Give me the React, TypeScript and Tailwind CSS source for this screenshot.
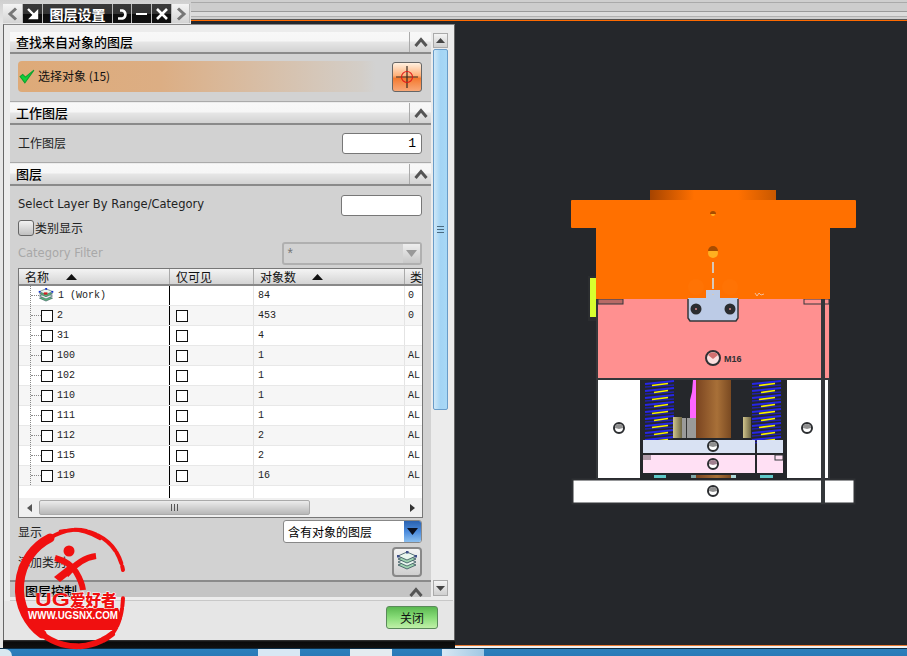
import React from "react";

const CJK = "font-['Noto_Sans_CJK_SC','Noto_Sans',sans-serif]";

function Chevron() {
  return (
    <svg width="14" height="10" viewBox="0 0 14 10">
      <polyline points="1.5,9 7,2.5 12.5,9" fill="none" stroke="#555" strokeWidth="3" />
    </svg>
  );
}

function SectionHeader({ title }: { title: string }) {
  return (
    <div className="h-[22px] shrink-0 flex items-stretch border-b-2 border-[#8a8a8a] bg-[linear-gradient(#f8f8f8_0%,#f6f6f6_45%,#e6e6e6_50%,#d2d2d2_100%)]">
      <div className="flex-1 pl-[6px] pb-[2px] flex items-center text-[13px] font-medium text-black leading-none">{title}</div>
      <div className="w-[22px] flex items-center justify-center border-l border-l-[#aaa]">
        <Chevron />
      </div>
    </div>
  );
}

function TabBtn({ children, w, light }: { children: React.ReactNode; w: number; light?: boolean }) {
  return (
    <div
      style={{ width: w }}
      className={
        "h-[19px] flex items-center justify-center border-r border-[#bbb] " +
        (light
          ? "bg-[linear-gradient(#f4f4f4,#d4d4d4)]"
          : "bg-[linear-gradient(#3a3a3a_0%,#333_50%,#0c0c0c_55%,#111_100%)] text-white")
      }
    >
      {children}
    </div>
  );
}

function Check({ size = 12 }: { size?: number }) {
  return <div style={{ width: size, height: size }} className="border border-[#111] bg-white" />;
}

const rows = [
  ["1 (Work)", "84", "0"],
  ["2", "453", "0"],
  ["31", "4", ""],
  ["100", "1", "AL"],
  ["102", "1", "AL"],
  ["110", "1", "AL"],
  ["111", "1", "AL"],
  ["112", "2", "AL"],
  ["115", "2", "AL"],
  ["119", "16", "AL"],
];

function LayersIcon({ size = 22, faded }: { size?: number; faded?: boolean }) {
  const ys = [13, 10, 7, 4];
  return (
    <svg width={size} height={size} viewBox="0 0 22 22">
      {ys.map((y, i) => (
        <polygon
          key={y}
          points={`11,${y - 3} 20,${y + 1} 11,${y + 5} 2,${y + 1}`}
          fill={i % 2 ? "#e9f6ee" : faded ? "#9fd3b0" : "#58b878"}
          stroke="#34505a"
          strokeWidth="0.8"
        />
      ))}
      <rect x="10" y="0" width="2.5" height="2.5" fill={faded ? "#3d4f88" : "#1030c8"} />
      <rect x="1" y="4" width="2.5" height="2.5" fill={faded ? "#3d4f88" : "#1030c8"} />
      <rect x="18.5" y="4" width="2.5" height="2.5" fill={faded ? "#3d4f88" : "#1030c8"} />
      {!faded && <rect x="8" y="6" width="5" height="3" fill="#d02020" />}
    </svg>
  );
}

function Hole({ x, y, r = 5, fill = "#ddd" }: { x: number; y: number; r?: number; fill?: string }) {
  return (
    <g>
      <circle cx={x} cy={y} r={r} fill="#fff" stroke="#2b2d30" strokeWidth="2" />
      <path d={`M${x - r + 1} ${y}A${r - 1} ${r - 1} 0 0 1 ${x + r - 1} ${y}L${x} ${y + 1}Z`} fill={fill === "#ddd" ? "#8f8f8f" : fill} />
    </g>
  );
}

function Spring({ x }: { x: number }) {
  const ys = Array.from({ length: 9 }, (_, i) => 382 + i * 7);
  return (
    <g>
      <rect x={x} y="380" width="31" height="58" fill="#25272b" />
      {ys.map((y, i) => (
        <g key={y}>
          <line x1={x + 1} y1={y + 2} x2={x + 30} y2={y - 1} stroke="#2626e8" strokeWidth="2" />
          <line x1={x + 1} y1={y + 5} x2={x + 30} y2={y + 3} stroke="#2020b0" strokeWidth="1.4" />
          <line x1={x + 8 + (i % 2) * 2} y1={y + 3.5} x2={x + 24} y2={y + 1.5} stroke="#f6f000" strokeWidth="1.6" />
        </g>
      ))}
    </g>
  );
}

function Mold() {
  return (
    <svg className="block w-full h-full" viewBox="455 24 452 621" preserveAspectRatio="xMinYMin meet">
      <defs>
        <linearGradient id="topP" x1="0" x2="1" y1="0" y2="0">
          <stop offset="0" stopColor="#a64400" />
          <stop offset="0.35" stopColor="#ff7000" />
          <stop offset="0.7" stopColor="#ff7000" />
          <stop offset="1" stopColor="#c85800" />
        </linearGradient>
        <linearGradient id="cop" x1="0" x2="1" y1="0" y2="0">
          <stop offset="0" stopColor="#7a4420" />
          <stop offset="0.6" stopColor="#a87038" />
          <stop offset="1" stopColor="#7a4a22" />
        </linearGradient>
        <linearGradient id="tan" x1="0" x2="1" y1="0" y2="0">
          <stop offset="0" stopColor="#d0c48c" />
          <stop offset="1" stopColor="#6e6644" />
        </linearGradient>
      </defs>
      <rect x="572.5" y="479.5" width="282" height="24" fill="#fff" stroke="#2f3134" strokeWidth="2" />
      <rect x="640" y="378" width="148" height="102" fill="#25272b" />
      <rect x="598" y="380" width="42" height="98" fill="#fff" />
      <rect x="787" y="380" width="34" height="98" fill="#fff" />
      <rect x="825" y="380" width="3" height="98" fill="#fff" />
      <rect x="596" y="299" width="2" height="180" fill="#34373a" />
      <rect x="828" y="299" width="2" height="180" fill="#34373a" />
      <rect x="598" y="299" width="231" height="79" fill="#ff9090" />
      <rect x="598" y="378" width="231" height="2" fill="#34373a" />
      <rect x="598" y="299" width="25" height="5" fill="#b86a66" stroke="#34373a" />
      <rect x="804" y="299" width="25" height="5" fill="#ff9090" stroke="#34373a" />
      <rect x="588" y="276" width="8" height="45" fill="#2b2d30" />
      <rect x="590" y="278" width="6" height="39" fill="#d8ff2f" />
      <rect x="650" y="190" width="126" height="11" fill="url(#topP)" />
      <rect x="596" y="228" width="234" height="71" fill="#ff7000" />
      <rect x="571" y="200" width="285" height="28" rx="1" fill="#ff7000" />
      <path d="M688 298H706V290H720V298H738V318L736 321H690L688 318Z" fill="#bccbe6" />
      <path d="M688 299V318L690 321H736L738 318V299" fill="none" stroke="#34373a" strokeWidth="1.5" />
      <circle cx="696" cy="309" r="5.5" fill="#2b2d30" />
      <circle cx="730" cy="309" r="5.5" fill="#2b2d30" />
      <circle cx="696" cy="309" r="1" fill="#d88" />
      <circle cx="730" cy="309" r="1" fill="#d88" />
      <circle cx="713" cy="214" r="2" fill="#ffb020" />
      <path d="M710 214A3 3 0 0 1 716 214" fill="#a84c00" />
      <circle cx="713" cy="253" r="5" fill="#ffb020" />
      <path d="M708 251A5 5 0 0 1 718 251" fill="#a84c00" />
      <line x1="713" y1="262" x2="713" y2="295" stroke="#d8c8b8" strokeWidth="2" strokeDasharray="11 5" />
      <path d="M755 293l2 3 2-3 2 2 3-1" fill="none" stroke="#f0d0c0" strokeWidth="0.8" />
      <circle cx="696" cy="287" r="8" fill="#ff7304" />
      <circle cx="730" cy="287" r="8" fill="#ff7304" />
      <rect x="821" y="299" width="4" height="205" fill="#34373a" />
      <circle cx="713" cy="358" r="7" fill="#fbe0e0" stroke="#2f3134" strokeWidth="2" />
      <path d="M708 355A6 6 0 0 1 718 355L713 359Z" fill="#d07070" />
      <text x="724" y="362" fontSize="9" fontWeight="700" fill="#2f3134" className="font-['Liberation_Sans',sans-serif]">
        M16
      </text>
      <Spring x={644} />
      <Spring x={751} />
      <path d="M693 380H696V418H690V400L692 392Z" fill="#ff66ff" />
      <rect x="696" y="380" width="35" height="58" fill="url(#cop)" />
      <rect x="673" y="417" width="9" height="21" fill="url(#tan)" />
      <rect x="743" y="417" width="8" height="21" fill="url(#tan)" />
      <rect x="682" y="418" width="14" height="20" fill="#9a9a9a" />
      <rect x="686" y="418" width="1" height="20" fill="#333" />
      <rect x="643" y="440" width="112" height="13" fill="#d9e2f3" />
      <rect x="757" y="440" width="26" height="13" fill="#d9e2f3" />
      <rect x="643" y="455" width="112" height="18" fill="#ffe0f4" />
      <rect x="757" y="455" width="26" height="18" fill="#ffe0f4" />
      <rect x="643" y="455" width="8" height="5" fill="#b09aa8" />
      <rect x="775" y="455" width="8" height="5" fill="#ffe0f4" stroke="#34373a" />
      <rect x="654" y="475" width="12" height="3" fill="#60c8c8" />
      <rect x="691" y="475" width="5" height="3" fill="#80a8a8" />
      <rect x="696" y="475" width="35" height="3" fill="url(#cop)" />
      <rect x="731" y="475" width="5" height="3" fill="#b0d8d8" />
      <rect x="760" y="475" width="13" height="3" fill="#60c8c8" />
      <Hole x={619} y={428} />
      <Hole x={807} y={428} />
      <Hole x={713} y={446} />
      <Hole x={713} y={464} fill="#a08090" />
      <Hole x={713} y={491} />
    </svg>
  );
}

function Logo() {
  return (
    <svg className="absolute left-0 top-[520px]" width="135" height="130" viewBox="0 520 135 130">
      <g fill="none" stroke="#f01010" strokeLinecap="round">
        <path d="M50 538A54 56 0 0 0 42 634" strokeWidth="9" />
        <path d="M42 634A56 56 0 0 0 112 634" strokeWidth="6" strokeDasharray="22 2 14 3" />
        <path d="M112 634Q122 622 123 598" strokeWidth="4" strokeDasharray="8 2" />
        <path d="M50 538Q72 524 95 534T123 570" strokeWidth="4" strokeDasharray="24 2 12 3 7 2" />
        <path d="M60 531Q80 527 100 539" strokeWidth="2.5" />
        <path d="M96 556Q80 558 66 575" strokeWidth="6" strokeLinecap="butt" />
        <path d="M55 558Q70 562 76 572T83 590" strokeWidth="6" strokeLinecap="butt" />
      </g>
      <path d="M54 577L68 566L74 571L60 582Z" fill="#f01010" />
      <circle cx="69" cy="551" r="5.5" fill="#f01010" />
      <path d="M24 608H118L122 618L116 630H36Z" fill="#f01010" />
      <text
        x="35"
        y="606"
        fontSize="19"
        fontWeight="800"
        fill="#f01010"
        stroke="#ffffff"
        strokeWidth="0.7"
        paintOrder="stroke"
        textLength="35"
        lengthAdjust="spacingAndGlyphs"
        className="font-['Liberation_Sans',sans-serif]"
      >
        UG
      </text>
      <text x="70" y="606" fontSize="15.5" fontWeight="800" fill="#f01010" stroke="#ffffff" strokeWidth="1.2" paintOrder="stroke" className={CJK}>
        爱好者
      </text>
      <text x="28" y="618.5" fontSize="10" fontWeight="700" fill="#fff" textLength="90" lengthAdjust="spacingAndGlyphs" className="font-['Liberation_Sans',sans-serif]">
        WWW.UGSNX.COM
      </text>
    </svg>
  );
}

export default function App() {
  return (
    <div className={"relative w-[907px] h-[656px] overflow-hidden bg-[#25272b] flex flex-col " + CJK}>
      {/* top strip */}
      <div className="h-[24px] flex shrink-0 bg-[#d6d6d6]">
        <div className="w-[191px] pl-[3px] pt-[4px] flex items-start bg-[linear-gradient(#cfcfcf,#e8e8e8)]">
          <TabBtn w={20} light>
            <svg width="12" height="14" viewBox="0 0 12 14"><polyline points="9,1.5 3,7 9,12.5" fill="none" stroke="#777" strokeWidth="3" /></svg>
          </TabBtn>
          <TabBtn w={20}>
            <svg width="14" height="14" viewBox="0 0 14 14"><path d="M2 2L9 9M5 11L11 11L11 5Z" stroke="#fff" strokeWidth="2.4" fill="#fff" /></svg>
          </TabBtn>
          <TabBtn w={70}>
            <span className="text-[14px] font-bold leading-none">图层设置</span>
          </TabBtn>
          <TabBtn w={19}>
            <svg width="14" height="14" viewBox="0 0 14 14"><path d="M3 11.5H7.5A4.2 4.2 0 0 0 7.5 3.5H5" fill="none" stroke="#fff" strokeWidth="2.6" /></svg>
          </TabBtn>
          <TabBtn w={20}>
            <div className="w-[11px] h-[2px] bg-white" />
          </TabBtn>
          <TabBtn w={20}>
            <svg width="14" height="14" viewBox="0 0 14 14"><path d="M2 2L12 12M12 2L2 12" stroke="#fff" strokeWidth="2.6" /></svg>
          </TabBtn>
          <TabBtn w={18} light>
            <svg width="12" height="14" viewBox="0 0 12 14"><polyline points="3,1.5 9,7 3,12.5" fill="none" stroke="#777" strokeWidth="3" /></svg>
          </TabBtn>
        </div>
        <div className="flex-1 flex flex-col">
          <div className="h-[3px] bg-[#cfcfcf] border-b border-[#aaa]" />
          <div className="h-[9px] bg-[#cdcdcd] border-b border-[#9a9a9a]" />
          <div className="h-[5px] bg-[#dcdcdc] border-b border-[#b0b0b0]" />
          <div className="h-[3px] bg-[#cfcfcf] border-b border-[#555]" />
          <div className="h-[1px] bg-[#ff6a00]" />
          <div className="h-[3px] bg-[#25272b]" />
        </div>
      </div>

      <div className="flex flex-1 min-h-0">
        {/* dialog */}
        <div className="w-[455px] shrink-0 flex flex-col bg-[#e9e9e9] border-l-[3px] border-l-[#e6e6e6]">
          <div className="flex-1 min-h-0 flex flex-col border-l border-r border-[#666] border-t border-t-[#888] bg-[#ececec]">
            <div className="h-[574px] shrink-0 pl-[6px] pt-[7px] flex">
              {/* scroll content */}
              <div className="w-[421px] h-[565px] flex flex-col overflow-hidden">
                <SectionHeader title="查找来自对象的图层" />
                <div className="h-[48px] shrink-0 mb-[1px] bg-[#d2d2d2] pl-[8px] pr-[9px] pt-[7px] flex items-start border-b border-[#aaa]">
                  <div className="w-[358px] h-[31px] pb-[2px] rounded-[4px] bg-[linear-gradient(90deg,#deaa78_0%,#dcae84_40%,#d3cec8_96%,#d2d2d2_100%)] flex items-center gap-[3px] pl-[1px] text-[12px] text-[#111]">
                    <svg width="16" height="16" viewBox="0 0 15 15"><path d="M1 8L5.5 14L14 2L6 8.5L3.5 6Z" fill="#10d038" stroke="#10a030" strokeWidth="1" /></svg>
                    <span>选择对象 (15)</span>
                  </div>
                  <div className="ml-auto mt-[1px] w-[30px] h-[30px] rounded-[3px] border border-[#666] bg-[linear-gradient(#fff0e0,#ffb078_45%,#f47a30_55%,#f8a878)] flex items-center justify-center">
                    <svg width="24" height="24" viewBox="0 0 24 24">
                      <path d="M12 1V23M1 12H23" stroke="#3a2a20" strokeWidth="1.2" />
                      <circle cx="12" cy="12" r="5.5" fill="none" stroke="#e01818" strokeWidth="1.1" />
                    </svg>
                  </div>
                </div>
                <SectionHeader title="工作图层" />
                <div className="h-[38px] shrink-0 mb-[1px] bg-[#d2d2d2] pl-[8px] pr-[9px] flex items-center justify-between text-[12px] text-[#222] border-b border-[#aaa]">
                  <span className="-mt-[2px]">工作图层</span>
                  <div className="w-[80px] h-[21px] rounded-[3px] border border-[#777] bg-white text-right pr-[5px] font-['Liberation_Mono',monospace] text-[13px] leading-[20px] text-black">1</div>
                </div>
                <SectionHeader title="图层" />
                <div className="flex-1 min-h-0 bg-[#d2d2d2] px-[8px] flex flex-col">
                  <div className="h-[36px] shrink-0 flex items-center justify-between pt-[2px]">
                    <span className="font-['DejaVu_Sans',sans-serif] text-[11.5px] text-[#222]">Select Layer By Range/Category</span>
                    <div className="w-[81px] h-[21px] mr-[1px] rounded-[3px] border border-[#777] bg-white" />
                  </div>
                  <div className="h-[18px] shrink-0 -mt-[3px] flex items-center gap-[1px] text-[12px] text-[#222]">
                    <div className="w-[16px] h-[16px] rounded-[3px] border border-[#666] bg-[linear-gradient(#f2f2f2,#c0c0c0)]" />
                    <span>类别显示</span>
                  </div>
                  <div className="h-[23px] shrink-0 mt-[5px] flex items-center justify-between">
                    <span className="font-['DejaVu_Sans',sans-serif] text-[11.5px] text-[#a8a8a8]">Category Filter</span>
                    <div className="w-[140px] h-[23px] mr-[1px] rounded-[3px] border-2 border-[#b0b0b0] flex items-stretch">
                      <span className="flex-1 pl-[2px] font-['Liberation_Mono',monospace] text-[14px] text-[#777] leading-[22px]">*</span>
                      <div className="w-[17px] bg-[linear-gradient(#eee,#c8c8c8)] flex items-center justify-center">
                        <svg width="11" height="8" viewBox="0 0 11 8"><path d="M0 0H11L5.5 7Z" fill="#999" /></svg>
                      </div>
                    </div>
                  </div>

                  {/* table */}
                  <div className="mt-[3px] w-[405px] h-[250px] shrink-0 border border-[#777] bg-white flex flex-col overflow-hidden">
                    <div className="h-[17px] shrink-0 flex text-[12px] text-[#111] border-b-2 border-[#888] bg-[linear-gradient(#f4f4f4,#d4d4d4)] leading-none">
                      <div className="w-[151px] pl-[6px] flex items-center gap-[17px] border-r border-[#aaa]">
                        <span>名称</span>
                        <svg width="11" height="6" viewBox="0 0 11 6"><path d="M5.5 0L11 6H0Z" fill="#111" /></svg>
                      </div>
                      <div className="w-[84px] pl-[6px] flex items-center border-r border-[#aaa]">仅可见</div>
                      <div className="w-[151px] pl-[6px] flex items-center gap-[16px] border-r border-[#aaa]">
                        <span>对象数</span>
                        <svg width="11" height="6" viewBox="0 0 11 6"><path d="M5.5 0L11 6H0Z" fill="#111" /></svg>
                      </div>
                      <div className="flex-1 pl-[5px] flex items-center whitespace-nowrap overflow-hidden">类</div>
                    </div>
                    {rows.map((r, i) => (
                      <div
                        key={r[0]}
                        className={
                          "h-[20px] shrink-0 flex text-[10px] text-[#222] font-['Liberation_Mono',monospace] border-b border-[#e8e8e8] " +
                          (i % 2 ? "bg-[#f6f6f6]" : "bg-white")
                        }
                      >
                        <div className="w-[151px] flex items-stretch border-r border-black">
                          <div className="ml-[11px] w-[11px] border-l border-dotted border-[#888] flex items-center">
                            <div className="w-full border-t border-dotted border-[#888]" />
                          </div>
                          <div className="flex items-center gap-[4px]">
                            {i === 0 ? (
                              <div className="-ml-[3px]"><LayersIcon size={16} /></div>
                            ) : (
                              <Check />
                            )}
                            <span>{r[0]}</span>
                          </div>
                        </div>
                        <div className="w-[84px] pl-[6px] flex items-center border-r border-[#e4e4e4]">{i > 0 && <Check />}</div>
                        <div className="w-[151px] pl-[4px] flex items-center border-r border-[#e4e4e4]">{r[1]}</div>
                        <div className="flex-1 pl-[3px] flex items-center">{r[2]}</div>
                      </div>
                    ))}
                    <div className="h-[12px] shrink-0 flex">
                      <div className="w-[151px] border-r border-black" />
                      <div className="w-[84px] border-r border-[#e4e4e4]" />
                      <div className="w-[151px] border-r border-[#e4e4e4]" />
                    </div>
                    <div className="h-[19px] shrink-0 flex items-center bg-[#f0f0f0]">
                      <div className="w-[20px] flex justify-center">
                        <svg width="5" height="8" viewBox="0 0 5 8"><path d="M5 0V8L0 4Z" fill="#555" /></svg>
                      </div>
                      <div className="w-[271px] h-[15px] rounded-[2px] border border-[#aaa] bg-[linear-gradient(#ececec,#b8b8b8)] flex items-center justify-center gap-[1px]">
                        <div className="w-[1px] h-[7px] bg-[#555]" /><div className="w-[1px] h-[7px] bg-[#555] mx-[1px]" /><div className="w-[1px] h-[7px] bg-[#555]" />
                      </div>
                      <div className="ml-auto w-[20px] flex justify-center">
                        <svg width="5" height="8" viewBox="0 0 5 8"><path d="M0 0V8L5 4Z" fill="#333" /></svg>
                      </div>
                    </div>
                  </div>

                  <div className="h-[23px] shrink-0 mt-[2px] flex items-center justify-between text-[12px] text-[#222]">
                    <span>显示</span>
                    <div className="w-[139px] h-[23px] mr-[1px] rounded-[3px] border border-[#888] bg-white flex items-stretch overflow-hidden">
                      <span className="flex-1 pl-[4px] leading-[21px] text-black">含有对象的图层</span>
                      <div className="w-[17px] bg-[linear-gradient(#2a62b0,#4a8adc_50%,#8cc0f0)] flex items-center justify-center">
                        <svg width="11" height="8" viewBox="0 0 11 8"><path d="M0 0H11L5.5 7Z" fill="#0a1020" /></svg>
                      </div>
                    </div>
                  </div>
                  <div className="h-[30px] shrink-0 mt-[4px] flex items-center justify-between text-[12px] text-[#222]">
                    <span>添加类别</span>
                    <div className="w-[30px] h-[30px] mr-[1px] rounded-[4px] border-2 border-[#888] bg-[linear-gradient(#f4f4f4,#cfcfcf)] flex items-center justify-center">
                      <LayersIcon size={22} faded />
                    </div>
                  </div>
                  <div className="-mx-[8px] mt-[3px] h-[20px] shrink-0 bg-[#c4c4c4] border-t-2 border-[#8a8a8a] pl-[15px] flex text-[13px] font-medium text-black leading-[17px]">
                    <span className="flex-1">图层控制</span>
                    <div className="w-[22px] pt-[5px]"><Chevron /></div>
                  </div>
                </div>
              </div>
              {/* vertical scrollbar */}
              <div className="ml-[2px] w-[15px] h-[564px] flex flex-col bg-[#ececec]">
                <div className="h-[15px] shrink-0 mt-[1px] border border-[#aaa] bg-[linear-gradient(#f4f4f4,#cfcfcf)] flex items-center justify-center">
                  <svg width="9" height="5" viewBox="0 0 9 5"><path d="M4.5 0L9 5H0Z" fill="#444" /></svg>
                </div>
                <div className="h-[361px] shrink-0 mt-[1px] border border-[#6a9cc8] rounded-[2px] bg-[linear-gradient(90deg,#cfe8f8,#a4d4f4,#a8d8f6)] flex items-center justify-center">
                  <div className="w-[7px] h-[7px] border-y border-[#4a6a80] flex items-center"><div className="w-full h-[1px] bg-[#4a6a80]" /></div>
                </div>
                <div className="flex-1" />
                <div className="h-[16px] shrink-0 border border-[#aaa] bg-[linear-gradient(#f4f4f4,#cfcfcf)] flex items-center justify-center">
                  <svg width="9" height="5" viewBox="0 0 9 5"><path d="M0 0H9L4.5 5Z" fill="#444" /></svg>
                </div>
              </div>
            </div>
            <div className="ml-[6px] mr-[1px] h-[1px] shrink-0 bg-[#c8c8c8] mt-[1px]" />
            {/* footer */}
            <div className="flex-1 min-h-0 bg-[#e6e6e6] flex items-start justify-end pt-[5px] pr-[16px]">
              <div className="w-[52px] h-[23px] rounded-[3px] border border-[#5a8a5a] bg-[linear-gradient(#5ab850,#88dc78_50%,#c0f0a8)] flex items-center justify-center text-[12px] text-[#111]">
                关闭
              </div>
            </div>
          </div>
          <div className="h-[8px] shrink-0 bg-[linear-gradient(#3a3a3a,#0a0a0a_25%,#111)]" />
        </div>

        {/* viewport */}
        <div className="flex-1 flex flex-col min-w-0">
          <div className="flex-1 min-h-0 bg-[#25272b]">
            <Mold />
          </div>
          <div className="h-[1px] shrink-0 bg-[#e87830]" />
          <div className="h-[2px] shrink-0 bg-[#f2f2f2]" />
        </div>
      </div>

      {/* taskbar */}
      <div className="h-[8px] shrink-0 flex items-stretch bg-[linear-gradient(#2c80bc,#2a7ab8)] border-t border-[#0c2c44]">
        <div className="w-[12px] rounded-tr-[8px] bg-[#d8e8f0]" />
        <div className="w-[246px]" />
        <div className="w-[42px] bg-[#d8e8f4]" />
        <div className="w-[50px]" />
        <div className="w-[42px] bg-[#e4ecf0]" />
        <div className="w-[50px]" />
        <div className="w-[42px] bg-[linear-gradient(90deg,#d8e8f4,#a0c8e4)]" />
        <div className="flex-1" />
      </div>

      <Logo />
    </div>
  );
}
